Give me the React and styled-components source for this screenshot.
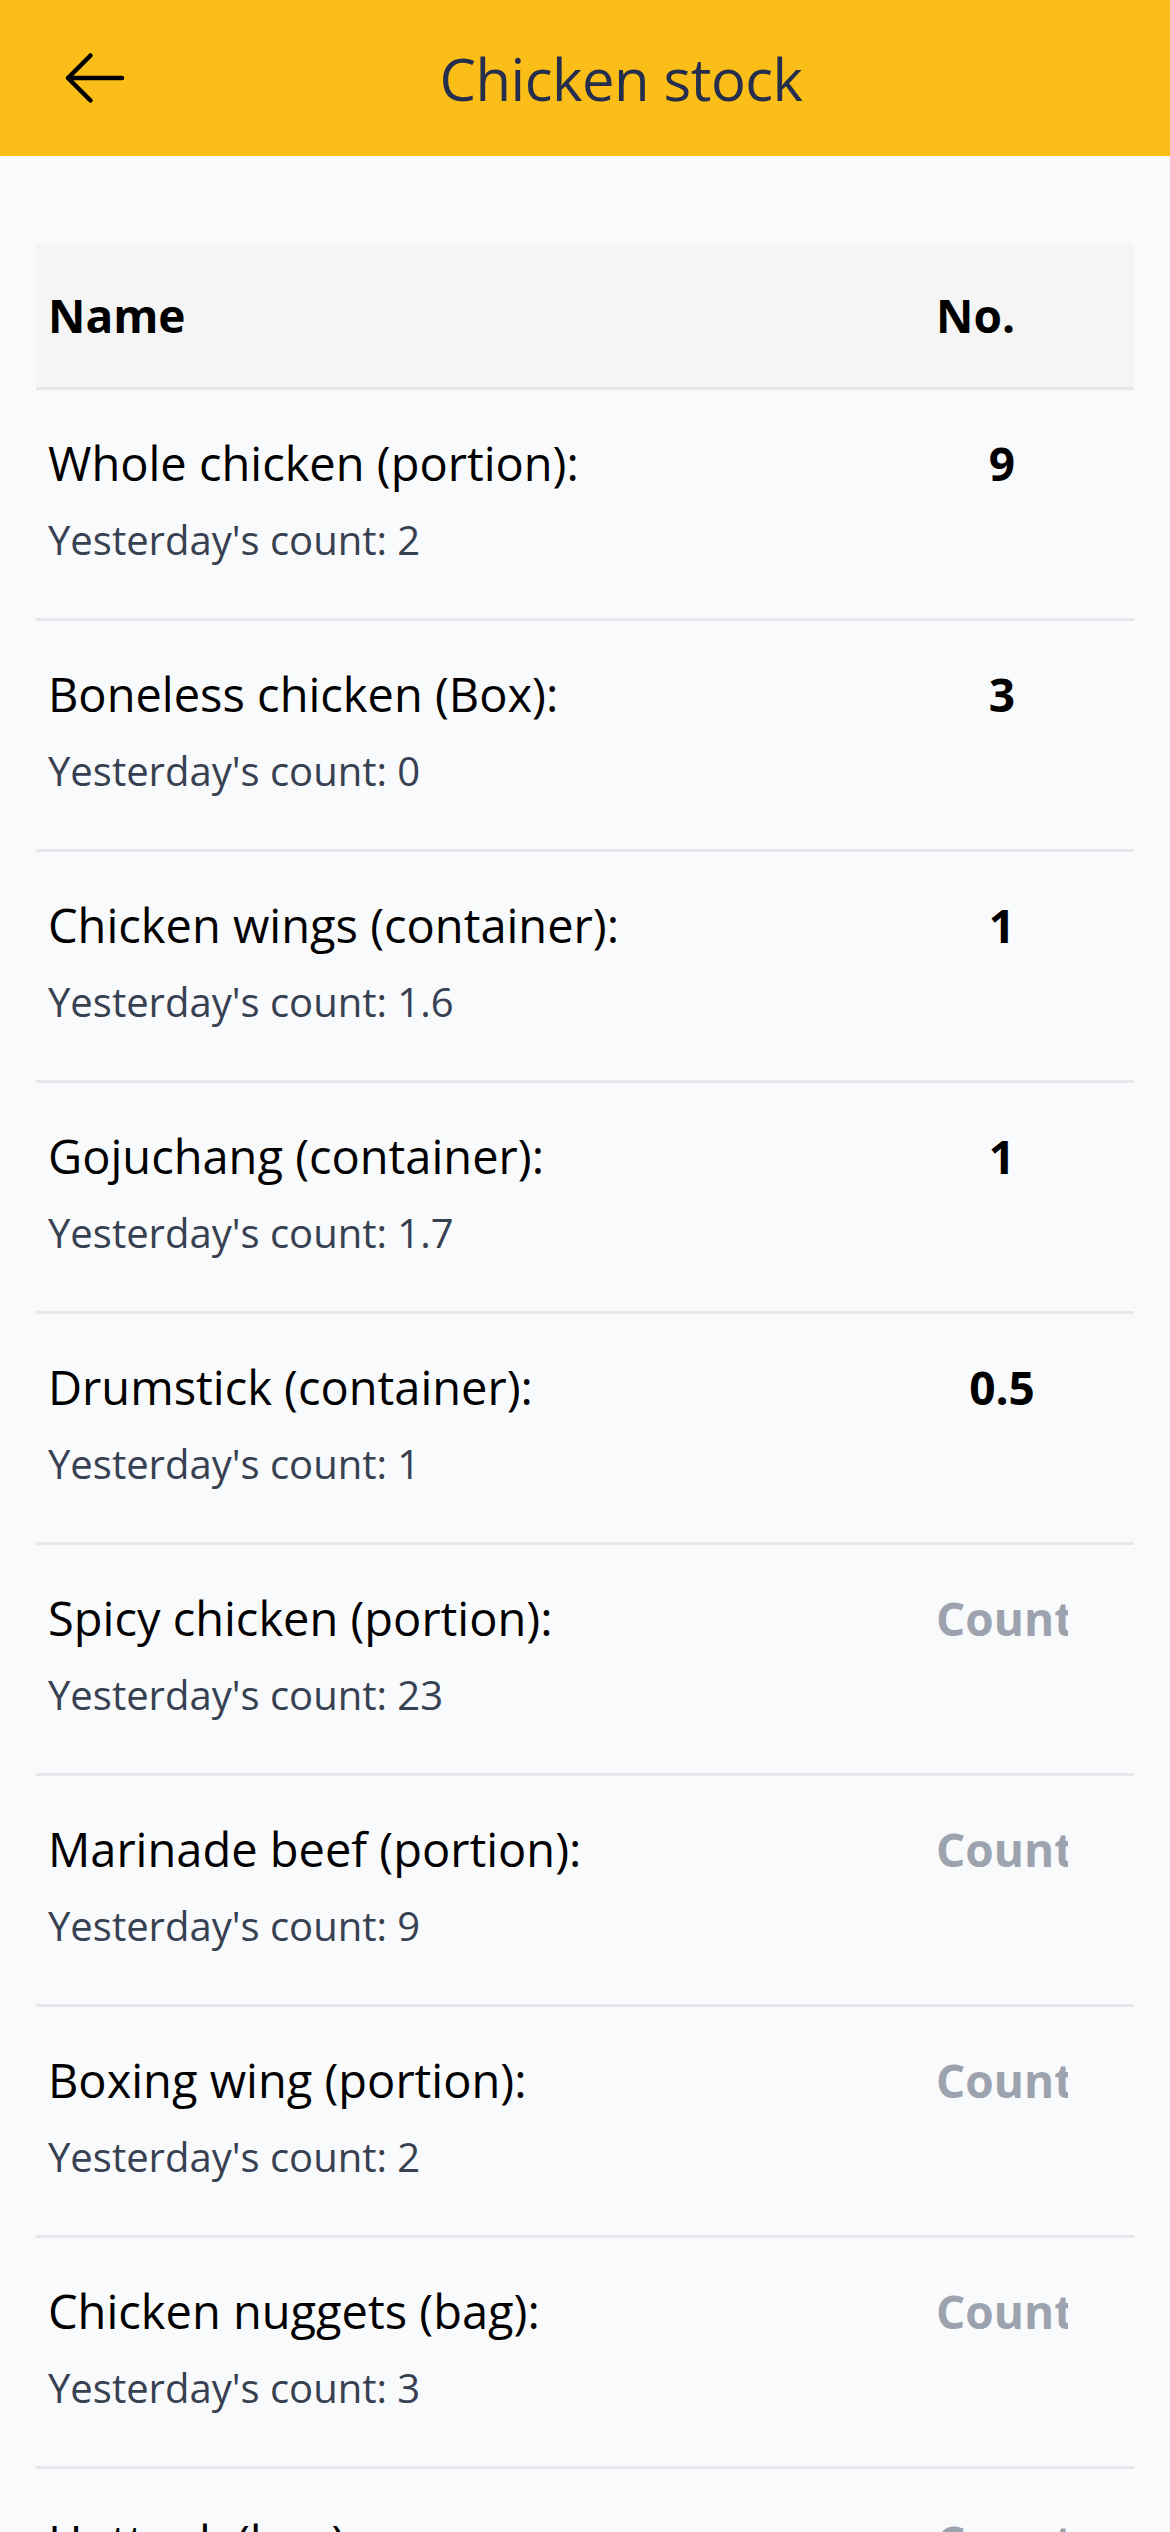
import React from 'react';
import styled, { createGlobalStyle } from 'styled-components';

const GlobalStyle = createGlobalStyle`
    body {
        margin: 0;
        background: #f9fafb;
        font-family: 'Open Sans', 'Noto Sans', sans-serif;
    }
`;

const Page = styled.div`
    min-height: 2532px;
    background: #f9fafb;
`;

const TopBar = styled.header`
    height: 156px;
    background: #fbbd17;
    display: flex;
    align-items: center;
    padding: 0 59px;
`;

const BackButton = styled.button`
    width: 72px;
    height: 72px;
    padding: 0;
    border: none;
    background: none;
    color: #000;
    display: flex;
    align-items: center;
    justify-content: center;
`;

const Title = styled.h1`
    flex: 1;
    margin: 0;
    text-align: center;
    font-size: 58px;
    font-weight: 500;
    color: #252e4d;
    letter-spacing: -0.5px;
`;

const Main = styled.main`
    padding: 87px 36px 0;
`;

const Table = styled.div`
    display: flex;
    flex-direction: column;
`;

const Row = styled.div`
    display: grid;
    grid-template-columns: 1fr 210px;
    border-bottom: 3px solid #e5e7eb;
    padding: ${p => (p.head ? '36px 0' : '37px 0 48px')};
    background: ${p => (p.head ? '#f5f5f5' : 'transparent')};
`;

const Cell = styled.div`
    padding: 0 12px;
    color: #000;
    font-size: 46px;
    line-height: 72px;
    font-weight: ${p => (p.bold ? 700 : 400)};
`;

const ItemName = styled.div`
    font-size: 47px;
    margin-bottom: 11px;
`;

const SubText = styled.div`
    font-size: 40px;
    line-height: 60px;
    color: #374151;
`;

const CountInput = styled.input`
    width: 132px;
    padding: 0;
    border: none;
    background: transparent;
    font-family: inherit;
    font-size: 46px;
    line-height: 72px;
    height: 72px;
    font-weight: 700;
    text-align: center;
    color: #000;
    outline: none;
    &::placeholder {
        color: #9ca3af;
        opacity: 1;
    }
`;

const items = [
    { name: 'Whole chicken (portion):', yesterday: '2', count: '9' },
    { name: 'Boneless chicken (Box):', yesterday: '0', count: '3' },
    { name: 'Chicken wings (container):', yesterday: '1.6', count: '1' },
    { name: 'Gojuchang (container):', yesterday: '1.7', count: '1' },
    { name: 'Drumstick (container):', yesterday: '1', count: '0.5' },
    { name: 'Spicy chicken (portion):', yesterday: '23', count: '' },
    { name: 'Marinade beef (portion):', yesterday: '9', count: '' },
    { name: 'Boxing wing (portion):', yesterday: '2', count: '' },
    { name: 'Chicken nuggets (bag):', yesterday: '3', count: '' },
    { name: 'Hotteok (box):', yesterday: '1', count: '' },
];

const ArrowLeft = () => (
    <svg width="72" height="72" viewBox="0 0 24 24" fill="none" stroke="currentColor"
        strokeWidth="1.5" strokeLinecap="round" strokeLinejoin="round">
        <path d="M10.5 19.5 3 12l7.5-7.5M3 12h18" />
    </svg>
);

const App = () => (
    <Page>
        <GlobalStyle />
        <TopBar>
            <BackButton aria-label="Back"><ArrowLeft /></BackButton>
            <Title>Chicken stock</Title>
        </TopBar>
        <Main>
            <Table>
                <Row head>
                    <Cell bold>Name</Cell>
                    <Cell bold>No.</Cell>
                </Row>
                {items.map(item => (
                    <Row key={item.name}>
                        <Cell>
                            <ItemName>{item.name}</ItemName>
                            <SubText>Yesterday's count: {item.yesterday}</SubText>
                        </Cell>
                        <Cell>
                            <CountInput readOnly value={item.count} placeholder="Count" />
                        </Cell>
                    </Row>
                ))}
            </Table>
        </Main>
    </Page>
);

export default App;
